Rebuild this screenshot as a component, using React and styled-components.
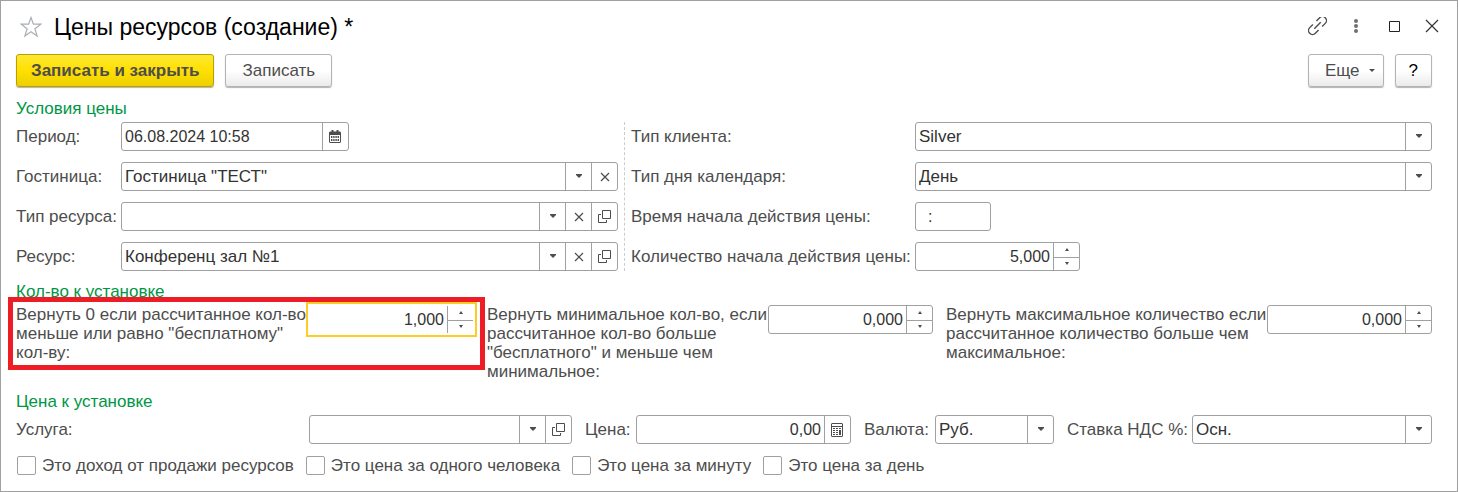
import React from 'react';
import styled, { createGlobalStyle } from 'styled-components';

const GlobalStyle = createGlobalStyle`
  * {
    box-sizing: border-box;
  }

  body {
    margin: 0;
    background-color: #fff;
    font-family: 'Liberation Sans', Arial, sans-serif;
    font-size: 17px;
    line-height: 19px;
    color: #4d4d4d;
  }

  button,
  input,
  select {
    font: inherit;
    color: inherit;
    margin: 0;
  }
`;

const Window = styled.form`
  border: 1px solid #a0a0a0;
  padding: 0 25px 16px 15px;
`;

const Header = styled.header`
  display: flex;
  align-items: center;
  gap: 12px;
  height: 52px;
  margin: 0 -10px 1px 4px;
`;

const Title = styled.h1`
  flex: 1;
  margin: 0;
  font-size: 23px;
  line-height: 28px;
  font-weight: normal;
  color: #000;
`;

const IconButton = styled.button`
  display: flex;
  padding: 0;
  border: none;
  background: none;
  cursor: pointer;
`;

const WindowControls = styled.div`
  display: flex;
  align-items: center;
  gap: 18px;
`;

const Toolbar = styled.div`
  display: flex;
  gap: 11px;
  height: 34px;
`;

const Spacer = styled.div`
  flex: 1;
`;

const Button = styled.button`
  display: flex;
  align-items: center;
  justify-content: center;
  gap: 8px;
  height: 33px;
  padding: 0 16px;
  border: 1px solid #b3b3b3;
  border-radius: 3px;
  box-shadow: 0 1px 1px rgba(0, 0, 0, 0.3);
  background: linear-gradient(#fff 50%, #ebebeb);
  cursor: pointer;
`;

const PrimaryButton = styled(Button)`
  padding: 0 14px;
  border-color: #b8a000;
  background: linear-gradient(#ffe833, #ffe000 50%, #edcf00);
  font-weight: bold;
`;

const MoreButton = styled(Button)`
  padding: 0 7px 0 16px;
`;

const HelpButton = styled(Button)`
  padding: 0 13px;
  color: #000;
`;

const GroupTitle = styled.h2`
  margin: 11px 0 4px;
  font-size: 17px;
  line-height: 19px;
  font-weight: normal;
  color: #009646;
`;

const Conditions = styled.div`
  display: grid;
  grid-template-columns: 76fr 101fr;
`;

const Column = styled.div`
  display: grid;
  grid-template-columns: ${(props) => props.$label} 1fr;
  grid-auto-rows: 29px;
  row-gap: 11px;
  align-items: center;

  &:first-child {
    padding-right: 6px;
  }

  & + & {
    border-left: 1px dashed #ccc;
    padding-left: 6px;
  }
`;

const Label = styled.label`
  white-space: nowrap;
`;

const Box = styled.div`
  display: grid;
  grid-template-columns: minmax(0, 1fr);
  grid-auto-columns: 26px;
  grid-auto-flow: column;
  width: ${(props) => props.$width || 'auto'};
  height: 29px;
  border: 1px solid ${(props) => (props.$active ? 'transparent' : '#a0a0a0')};
  border-radius: ${(props) => (props.$active ? '0' : '3px')};
  background-color: #fff;
  outline: ${(props) => (props.$active ? '2px solid #ffcc26' : 'none')};
  outline-offset: 1px;
`;

const Input = styled.input`
  min-width: 0;
  padding: 0 3px;
  border: none;
  outline: none;
  background: none;
  font-size: 16px;
  color: #333;
  text-align: ${(props) => (props.$right ? 'right' : 'left')};
`;

const Select = styled.select`
  grid-row: 1;
  grid-column: 1 / span 2;
  min-width: 0;
  padding: 0 30px 0 3px;
  border: none;
  outline: none;
  background: none;
  color: #333;
  appearance: none;
`;

// Sits over the right end of the select, clicks go through to it
const Arrow = styled.span`
  grid-row: 1;
  grid-column: 2;
  display: flex;
  align-items: center;
  justify-content: center;
  border-left: 1px solid #a0a0a0;
  pointer-events: none;
`;

const BoxButton = styled.button`
  display: flex;
  align-items: center;
  justify-content: center;
  padding: 0;
  border: none;
  border-left: 1px solid #a0a0a0;
  background: none;
  cursor: pointer;
`;

const Spinner = styled.div`
  display: grid;
  grid-template-rows: 1fr 1fr;
  border-left: 1px solid #a0a0a0;
`;

const SpinButton = styled.button`
  display: flex;
  align-items: center;
  justify-content: center;
  min-height: 0;
  padding: 0;
  border: none;
  background: none;
  cursor: pointer;

  & + & {
    border-top: 1px solid #a0a0a0;
  }
`;

const Quantities = styled.div`
  display: grid;
  grid-template-columns: 458fr 446fr 486fr;
  column-gap: 13px;
  align-items: start;
`;

const Quantity = styled.div`
  position: relative;
  display: grid;
  grid-template-columns: minmax(0, 1fr) 165px;
`;

const Highlight = styled.div`
  position: absolute;
  inset: -8px -11px -8px -8px;
  border: 5px solid #ee1c25;
  pointer-events: none;
`;

const PriceRow = styled.div`
  display: grid;
  grid-template-columns: 293px 263fr 64px 215fr 84px 119fr 138px 240fr;
  align-items: center;
`;

const PriceLabel = styled(Label)`
  padding-left: 13px;

  &:first-child {
    padding-left: 0;
  }
`;

const Checks = styled.div`
  display: flex;
  flex-wrap: wrap;
  gap: 12px;
  margin: 12px 0 0 1px;
`;

const CheckLabel = styled.label`
  display: flex;
  align-items: center;
  gap: 6px;
`;

const Checkbox = styled.input`
  width: 19px;
  height: 19px;
  border: 1px solid #a0a0a0;
  border-radius: 2px;
  background-color: #fff;
  appearance: none;

  &:checked {
    background-color: #ffe000;
  }
`;

const DownIcon = () => (
  <svg width="8" height="5" viewBox="0 0 8 5" fill="#4d4d4d">
    <path d="M1 0h6v1L4 4 1 1z" />
  </svg>
);

const SmallDownIcon = () => (
  <svg width="8" height="4" viewBox="0 0 8 4" fill="#4d4d4d">
    <path d="M1 0h6L4 3z" />
  </svg>
);

const SpinIcon = ({ up }) => (
  <svg width="6" height="3" viewBox="0 0 6 3" fill="#4d4d4d">
    <path d={up ? 'M1 3h4L3 0z' : 'M1 0h4L3 3z'} />
  </svg>
);

const ClearIcon = () => (
  <svg width="10" height="10" viewBox="0 0 10 10" stroke="#4d4d4d" strokeWidth="1.2">
    <path d="M1 1l8 8M9 1L1 9" />
  </svg>
);

const OpenIcon = () => (
  <svg width="13" height="13" viewBox="0 0 13 13" fill="none" stroke="#4d4d4d">
    <path d="M4.5.5h8v8h-8z" />
    <path d="M3 4.5H.5v8h8V10" />
  </svg>
);

const CalendarIcon = () => (
  <svg width="13" height="13" viewBox="0 0 13 13" fill="#4d4d4d">
    <path d="M1 1.500h1.500V0h2v1.500h3V0h2v1.500H11l1 1V12l-1 1H1l-1-1V2.500zM1 5v7h10V5z" fillRule="evenodd" />
    <path d="M2 6h1.400v2H2zM4.200 6h1.400v2H4.200zM6.400 6h1.400v2H6.400zM8.600 6H10v2H8.600zM2 9h1.400v2H2zM4.200 9h1.400v2H4.200zM6.400 9h1.400v2H6.400zM8.600 9H10v2H8.600z" />
  </svg>
);

const CalculatorIcon = () => (
  <svg width="13" height="14" viewBox="0 0 13 14" fill="#4d4d4d">
    <path d="M1 0h10l1 1v12l-1 1H1l-1-1V1zM1 1v2h10V1zM1 4v9h10V4z" fillRule="evenodd" />
    <path d="M2 5h2v1H2zM5 5h2v1H5zM8 5h2v1H8zM2 7h2v1H2zM5 7h2v1H5zM8 7h2v5H8zM2 9h2v1H2zM5 9h2v1H5zM2 11h2v1H2zM5 11h2v1H5z" />
  </svg>
);

const StarIcon = () => (
  <svg width="22" height="22" viewBox="0 0 22 22" fill="none" stroke="#a9afb5" strokeWidth="1.2">
    <path d="M11 1.500l2.400 6.700h7.400l-5.900 4.500 2.200 7.300L11 15.800 4.900 20l2.200-7.300L1.200 8.200h7.400z" />
  </svg>
);

const LinkIcon = () => (
  <svg width="20" height="20" viewBox="0 0 20 20" fill="none" stroke="#4d4d4d" strokeWidth="1.4">
    <g transform="translate(9.5 8.5) rotate(-45)">
      <path d="M-2.500-4H-7a4 4 0 0 0 0 8h4.500" />
      <path d="M2.500-4H7a4 4 0 0 1 0 8H2.500" />
      <path d="M-4.500 0h9" />
    </g>
  </svg>
);

const DotsIcon = () => (
  <svg width="20" height="20" viewBox="0 0 20 20" fill="#707070">
    <circle cx="10" cy="4" r="2" />
    <circle cx="10" cy="9" r="2" />
    <circle cx="10" cy="14" r="2" />
  </svg>
);

const MaximizeIcon = () => (
  <svg width="20" height="20" viewBox="0 0 20 20" fill="none" stroke="#222">
    <path d="M5.5 4.5h10v10h-10z" />
  </svg>
);

const CloseIcon = () => (
  <svg width="20" height="20" viewBox="0 0 20 20" stroke="#333" strokeWidth="1.2">
    <path d="M4 3l12 12M16 3L4 15" />
  </svg>
);

function SelectField({ id, value, clear, open }) {
  return (
    <Box>
      <Select id={id} defaultValue={value}>
        <option>{value}</option>
      </Select>
      <Arrow>
        <DownIcon />
      </Arrow>
      {clear && (
        <BoxButton type="button" aria-label="Очистить">
          <ClearIcon />
        </BoxButton>
      )}
      {open && (
        <BoxButton type="button" aria-label="Открыть">
          <OpenIcon />
        </BoxButton>
      )}
    </Box>
  );
}

function NumberField({ id, value, active }) {
  return (
    <Box $width="165px" $active={active}>
      <Input id={id} defaultValue={value} $right />
      <Spinner>
        <SpinButton type="button" aria-label="Больше">
          <SpinIcon up />
        </SpinButton>
        <SpinButton type="button" aria-label="Меньше">
          <SpinIcon />
        </SpinButton>
      </Spinner>
    </Box>
  );
}

const checks = [
  'Это доход от продажи ресурсов',
  'Это цена за одного человека',
  'Это цена за минуту',
  'Это цена за день',
];

function App() {
  return (
    <Window onSubmit={(e) => e.preventDefault()}>
      <GlobalStyle />
      <Header>
        <IconButton type="button" aria-label="В избранное">
          <StarIcon />
        </IconButton>
        <Title>Цены ресурсов (создание) *</Title>
        <WindowControls>
          <IconButton type="button" aria-label="Ссылка">
            <LinkIcon />
          </IconButton>
          <IconButton type="button" aria-label="Меню">
            <DotsIcon />
          </IconButton>
          <IconButton type="button" aria-label="Развернуть">
            <MaximizeIcon />
          </IconButton>
          <IconButton type="button" aria-label="Закрыть">
            <CloseIcon />
          </IconButton>
        </WindowControls>
      </Header>

      <Toolbar>
        <PrimaryButton type="submit">Записать и закрыть</PrimaryButton>
        <Button type="button">Записать</Button>
        <Spacer />
        <MoreButton type="button">
          Еще <SmallDownIcon />
        </MoreButton>
        <HelpButton type="button">?</HelpButton>
      </Toolbar>

      <GroupTitle>Условия цены</GroupTitle>
      <Conditions>
        <Column $label="105px">
          <Label htmlFor="period">Период:</Label>
          <Box $width="228px">
            <Input id="period" defaultValue="06.08.2024 10:58" />
            <BoxButton type="button" aria-label="Календарь">
              <CalendarIcon />
            </BoxButton>
          </Box>
          <Label htmlFor="hotel">Гостиница:</Label>
          <SelectField id="hotel" value={'Гостиница "ТЕСТ"'} clear />
          <Label htmlFor="resourceType">Тип ресурса:</Label>
          <SelectField id="resourceType" value="" clear open />
          <Label htmlFor="resource">Ресурс:</Label>
          <SelectField id="resource" value="Конференц зал №1" clear open />
        </Column>
        <Column $label="284px">
          <Label htmlFor="clientType">Тип клиента:</Label>
          <SelectField id="clientType" value="Silver" />
          <Label htmlFor="dayType">Тип дня календаря:</Label>
          <SelectField id="dayType" value="День" />
          <Label htmlFor="startTime">Время начала действия цены:</Label>
          <Box $width="76px">
            <Input id="startTime" defaultValue="  :" />
          </Box>
          <Label htmlFor="startCount">Количество начала действия цены:</Label>
          <NumberField id="startCount" value="5,000" />
        </Column>
      </Conditions>

      <GroupTitle>Кол-во к установке</GroupTitle>
      <Quantities>
        <Quantity>
          <Label htmlFor="freeCount">
            Вернуть 0 если рассчитанное кол-во
            <br />
            меньше или равно "бесплатному"
            <br />
            кол-ву:
          </Label>
          <NumberField id="freeCount" value="1,000" active />
          <Highlight />
        </Quantity>
        <Quantity>
          <Label htmlFor="minCount">
            Вернуть минимальное кол-во, если
            <br />
            рассчитанное кол-во больше
            <br />
            "бесплатного" и меньше чем
            <br />
            минимальное:
          </Label>
          <NumberField id="minCount" value="0,000" />
        </Quantity>
        <Quantity>
          <Label htmlFor="maxCount">
            Вернуть максимальное количество если
            <br />
            рассчитанное количество больше чем
            <br />
            максимальное:
          </Label>
          <NumberField id="maxCount" value="0,000" />
        </Quantity>
      </Quantities>

      <GroupTitle>Цена к установке</GroupTitle>
      <PriceRow>
        <PriceLabel htmlFor="service">Услуга:</PriceLabel>
        <SelectField id="service" value="" open />
        <PriceLabel htmlFor="price">Цена:</PriceLabel>
        <Box>
          <Input id="price" defaultValue="0,00" $right />
          <BoxButton type="button" aria-label="Калькулятор">
            <CalculatorIcon />
          </BoxButton>
        </Box>
        <PriceLabel htmlFor="currency">Валюта:</PriceLabel>
        <SelectField id="currency" value="Руб." />
        <PriceLabel htmlFor="vat">Ставка НДС %:</PriceLabel>
        <SelectField id="vat" value="Осн." />
      </PriceRow>

      <Checks>
        {checks.map((text) => (
          <CheckLabel key={text}>
            <Checkbox type="checkbox" />
            {text}
          </CheckLabel>
        ))}
      </Checks>
    </Window>
  );
}

export default App;
